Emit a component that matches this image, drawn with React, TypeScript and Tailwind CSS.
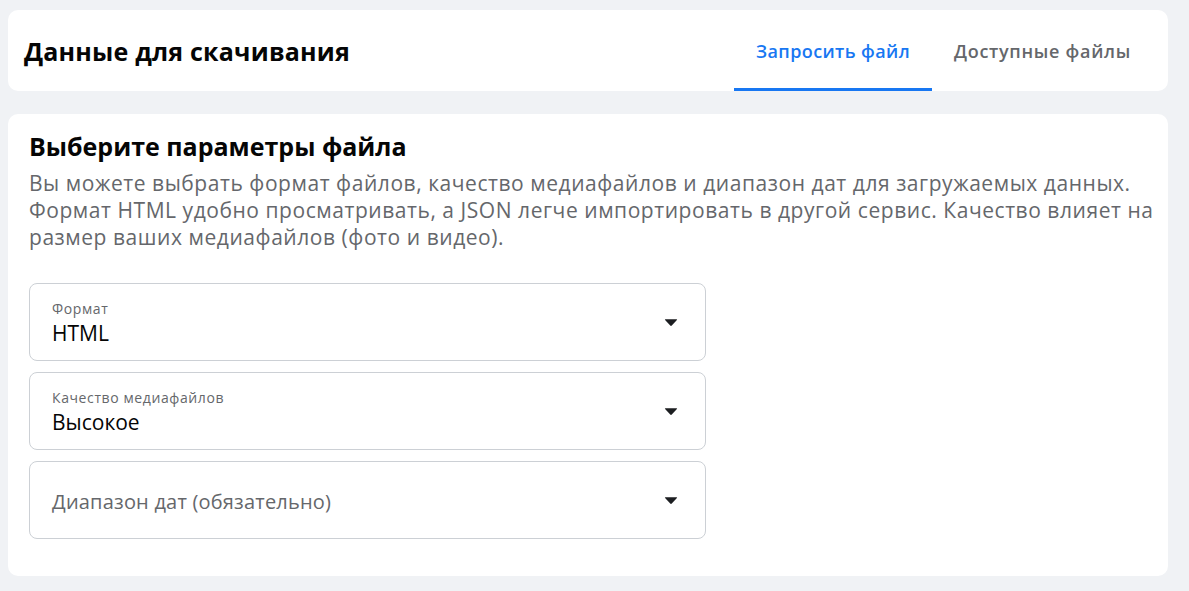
import React from "react";

function Caret() {
  return (
    <svg width="14" height="9" viewBox="0 0 14 9" className="shrink-0">
      <path d="M1.5 1.2 H12.5 Q13.6 1.2 12.9 2.1 L7.8 7.6 Q7 8.4 6.2 7.6 L1.1 2.1 Q0.4 1.2 1.5 1.2 Z" fill="#1c1e21" />
    </svg>
  );
}

function Select({ label, value, placeholder }: { label?: string; value?: string; placeholder?: string }) {
  return (
    <div className="flex h-[78px] w-[677px] items-center rounded-[8px] border border-[#ccd0d5] pl-[22px] pr-[27px]">
      <div className="flex flex-1 flex-col">
        {label ? (
          <>
            <span className="mt-[1px] text-[14px] leading-[17px] tracking-[0.6px] text-[#65676b]">{label}</span>
            <span className="mt-[3px] text-[21px] leading-[26px] text-[#050505]">{value}</span>
          </>
        ) : (
          <span className="mt-[4px] text-[20px] leading-[26px] tracking-[0.2px] text-[#65676b]">{placeholder}</span>
        )}
      </div>
      <div className="mt-[1px]">
        <Caret />
      </div>
    </div>
  );
}

export default function App() {
  return (
    <div
      className="min-h-[591px] w-full bg-[#f0f2f5] px-[8px] pt-[10px] pb-[16px]"
      style={{ fontFamily: '"Open Sans", "Noto Sans", Arial, sans-serif' }}
    >
      <div className="flex h-[81px] w-[1160px] items-stretch justify-between rounded-[10px] bg-white pl-[16px] pr-[15px]">
        <div className="flex items-center">
          <h1 className="text-[25px] font-bold leading-[30px] tracking-[0.2px] text-[#050505]">Данные для скачивания</h1>
        </div>
        <div className="flex items-stretch">
          <div className="relative flex items-center px-[22px] pt-[1px] text-[18px] font-semibold tracking-[0.4px] text-[#1877f2]">
            Запросить файл
            <div className="absolute bottom-0 left-0 right-0 h-[3px] bg-[#1877f2]" />
          </div>
          <div className="flex items-center px-[22px] pt-[1px] text-[18px] font-semibold tracking-[0.7px] text-[#65676b]">Доступные файлы</div>
        </div>
      </div>
      <div className="mt-[23px] w-[1160px] rounded-[10px] bg-white px-[21px] pt-[16px] pb-[37px]">
        <h2 className="text-[25px] font-bold leading-[32px] text-[#050505]">Выберите параметры файла</h2>
        <p className="mr-[-16px] mt-[8px] text-[21px] leading-[27px] tracking-[0.55px] text-[#65676b]">
          Вы можете выбрать формат файлов, качество медиафайлов и диапазон дат для загружаемых данных. Формат HTML удобно просматривать, а JSON легче импортировать в другой сервис. Качество влияет на размер ваших медиафайлов (фото и видео).
        </p>
        <div className="mt-[32px] flex flex-col gap-[11px]">
          <Select label="Формат" value="HTML" />
          <Select label="Качество медиафайлов" value="Высокое" />
          <Select placeholder="Диапазон дат (обязательно)" />
        </div>
      </div>
    </div>
  );
}
